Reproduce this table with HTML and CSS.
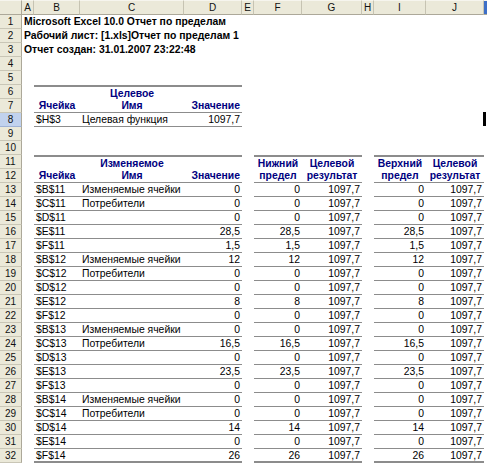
FILE: index.html
```html
<!DOCTYPE html>
<html lang="ru">
<head>
<meta charset="utf-8">
<title>Отчет по пределам</title>
<link rel="stylesheet" href="styles.css">
</head>
<body>
<div class="sheet">
  <div class="row colhdr">
    <div class="corner"></div>
    <div class="ch">A</div><div class="ch">B</div><div class="ch">C</div><div class="ch">D</div><div class="ch">E</div>
    <div class="ch">F</div><div class="ch">G</div><div class="ch">H</div><div class="ch">I</div><div class="ch">J</div><div class="ch sel"></div>
  </div>

  <div class="row"><div class="rh">1</div><div class="title">Microsoft Excel 10.0 Отчет по пределам</div></div>
  <div class="row"><div class="rh">2</div><div class="title">Рабочий лист: [1.xls]Отчет по пределам 1</div></div>
  <div class="row"><div class="rh">3</div><div class="title">Отчет создан: 31.01.2007 23:22:48</div></div>
  <div class="row"><div class="rh">4</div></div>
  <div class="row"><div class="rh">5</div></div>
  <div class="row"><div class="rh">6</div><div class="cB tp"></div><div class="cC tp hd ctr">Целевое</div><div class="cD tp"></div></div>
  <div class="row"><div class="rh">7</div><div class="cB hd ctr ln">Ячейка</div><div class="cC hd ctr ln">Имя</div><div class="cD hd num ln">Значение</div></div>
  <div class="row"><div class="rh hl">8</div><div class="cB ln">$H$3</div><div class="cC ln">Целевая функция</div><div class="cD num ln">1097,7</div><div class="cursor"></div></div>
  <div class="row"><div class="rh">9</div></div>
  <div class="row"><div class="rh">10</div></div>
  <div class="row"><div class="rh">11</div>
    <div class="cB tp"></div><div class="cC tp hd ctr">Изменяемое</div><div class="cD tp"></div>
    <div class="cF tp hd ctr">Нижний</div><div class="cG tp hd ctr">Целевой</div>
    <div class="cI tp hd ctr">Верхний</div><div class="cJ tp hd ctr">Целевой</div>
  </div>
  <div class="row"><div class="rh">12</div>
    <div class="cB hd ctr ln">Ячейка</div><div class="cC hd ctr ln">Имя</div><div class="cD hd num ln">Значение</div>
    <div class="cF hd ctr ln">предел</div><div class="cG hd ctr ln">результат</div>
    <div class="cI hd ctr ln">предел</div><div class="cJ hd ctr ln">результат</div>
  </div>

  <div class="row"><div class="rh">13</div><div class="cB ln">$B$11</div><div class="cC ln">Изменяемые ячейки</div><div class="cD num ln">0</div><div class="cF num ln">0</div><div class="cG num ln">1097,7</div><div class="cI num ln">0</div><div class="cJ num ln">1097,7</div></div>
  <div class="row"><div class="rh">14</div><div class="cB ln">$C$11</div><div class="cC ln">Потребители</div><div class="cD num ln">0</div><div class="cF num ln">0</div><div class="cG num ln">1097,7</div><div class="cI num ln">0</div><div class="cJ num ln">1097,7</div></div>
  <div class="row"><div class="rh">15</div><div class="cB ln">$D$11</div><div class="cC ln"></div><div class="cD num ln">0</div><div class="cF num ln">0</div><div class="cG num ln">1097,7</div><div class="cI num ln">0</div><div class="cJ num ln">1097,7</div></div>
  <div class="row"><div class="rh">16</div><div class="cB ln">$E$11</div><div class="cC ln"></div><div class="cD num ln">28,5</div><div class="cF num ln">28,5</div><div class="cG num ln">1097,7</div><div class="cI num ln">28,5</div><div class="cJ num ln">1097,7</div></div>
  <div class="row"><div class="rh">17</div><div class="cB ln">$F$11</div><div class="cC ln"></div><div class="cD num ln">1,5</div><div class="cF num ln">1,5</div><div class="cG num ln">1097,7</div><div class="cI num ln">1,5</div><div class="cJ num ln">1097,7</div></div>
  <div class="row"><div class="rh">18</div><div class="cB ln">$B$12</div><div class="cC ln">Изменяемые ячейки</div><div class="cD num ln">12</div><div class="cF num ln">12</div><div class="cG num ln">1097,7</div><div class="cI num ln">12</div><div class="cJ num ln">1097,7</div></div>
  <div class="row"><div class="rh">19</div><div class="cB ln">$C$12</div><div class="cC ln">Потребители</div><div class="cD num ln">0</div><div class="cF num ln">0</div><div class="cG num ln">1097,7</div><div class="cI num ln">0</div><div class="cJ num ln">1097,7</div></div>
  <div class="row"><div class="rh">20</div><div class="cB ln">$D$12</div><div class="cC ln"></div><div class="cD num ln">0</div><div class="cF num ln">0</div><div class="cG num ln">1097,7</div><div class="cI num ln">0</div><div class="cJ num ln">1097,7</div></div>
  <div class="row"><div class="rh">21</div><div class="cB ln">$E$12</div><div class="cC ln"></div><div class="cD num ln">8</div><div class="cF num ln">8</div><div class="cG num ln">1097,7</div><div class="cI num ln">8</div><div class="cJ num ln">1097,7</div></div>
  <div class="row"><div class="rh">22</div><div class="cB ln">$F$12</div><div class="cC ln"></div><div class="cD num ln">0</div><div class="cF num ln">0</div><div class="cG num ln">1097,7</div><div class="cI num ln">0</div><div class="cJ num ln">1097,7</div></div>
  <div class="row"><div class="rh">23</div><div class="cB ln">$B$13</div><div class="cC ln">Изменяемые ячейки</div><div class="cD num ln">0</div><div class="cF num ln">0</div><div class="cG num ln">1097,7</div><div class="cI num ln">0</div><div class="cJ num ln">1097,7</div></div>
  <div class="row"><div class="rh">24</div><div class="cB ln">$C$13</div><div class="cC ln">Потребители</div><div class="cD num ln">16,5</div><div class="cF num ln">16,5</div><div class="cG num ln">1097,7</div><div class="cI num ln">16,5</div><div class="cJ num ln">1097,7</div></div>
  <div class="row"><div class="rh">25</div><div class="cB ln">$D$13</div><div class="cC ln"></div><div class="cD num ln">0</div><div class="cF num ln">0</div><div class="cG num ln">1097,7</div><div class="cI num ln">0</div><div class="cJ num ln">1097,7</div></div>
  <div class="row"><div class="rh">26</div><div class="cB ln">$E$13</div><div class="cC ln"></div><div class="cD num ln">23,5</div><div class="cF num ln">23,5</div><div class="cG num ln">1097,7</div><div class="cI num ln">23,5</div><div class="cJ num ln">1097,7</div></div>
  <div class="row"><div class="rh">27</div><div class="cB ln">$F$13</div><div class="cC ln"></div><div class="cD num ln">0</div><div class="cF num ln">0</div><div class="cG num ln">1097,7</div><div class="cI num ln">0</div><div class="cJ num ln">1097,7</div></div>
  <div class="row"><div class="rh">28</div><div class="cB ln">$B$14</div><div class="cC ln">Изменяемые ячейки</div><div class="cD num ln">0</div><div class="cF num ln">0</div><div class="cG num ln">1097,7</div><div class="cI num ln">0</div><div class="cJ num ln">1097,7</div></div>
  <div class="row"><div class="rh">29</div><div class="cB ln">$C$14</div><div class="cC ln">Потребители</div><div class="cD num ln">0</div><div class="cF num ln">0</div><div class="cG num ln">1097,7</div><div class="cI num ln">0</div><div class="cJ num ln">1097,7</div></div>
  <div class="row"><div class="rh">30</div><div class="cB ln">$D$14</div><div class="cC ln"></div><div class="cD num ln">14</div><div class="cF num ln">14</div><div class="cG num ln">1097,7</div><div class="cI num ln">14</div><div class="cJ num ln">1097,7</div></div>
  <div class="row"><div class="rh">31</div><div class="cB ln">$E$14</div><div class="cC ln"></div><div class="cD num ln">0</div><div class="cF num ln">0</div><div class="cG num ln">1097,7</div><div class="cI num ln">0</div><div class="cJ num ln">1097,7</div></div>
  <div class="row last"><div class="rh">32</div><div class="cB ln">$F$14</div><div class="cC ln"></div><div class="cD num ln">26</div><div class="cF num ln">26</div><div class="cG num ln">1097,7</div><div class="cI num ln">26</div><div class="cJ num ln">1097,7</div></div>
</div>
</body>
</html>
```

FILE: styles.css
```css
html, body {
  margin: 0;
  padding: 0;
  background: #ffffff;
}

.sheet {
  position: relative;
  width: 487px;
  height: 463px;
  overflow: hidden;
  font-family: "Liberation Sans", Arial, sans-serif;
  font-size: 10.4px;
  color: #000;
}

.row {
  display: grid;
  grid-template-columns: 22px 12px 46px 104px 58px 12px 48px 60px 12px 52px 58px 1fr;
  height: 14px;
  position: relative;
}

.row > div {
  box-sizing: border-box;
  height: 14px;
  line-height: 13px;
  white-space: nowrap;
}

.colhdr {
  height: 15px;
}

.colhdr > div {
  height: 15px;
  line-height: 14px;
  background: #ebe9d9;
  border-top: 1px solid #f6f5ee;
  border-bottom: 1px solid #aca899;
  border-right: 1px solid #c6c3b2;
  text-align: center;
  font-size: 10px;
  color: #111;
}

.colhdr .corner {
  border-right: 1px solid #aca899;
}

.colhdr .sel {
  background: #3d6fc7;
  border-right: none;
}

.rh {
  grid-column: 1;
  background: #ebe9d9;
  border-right: 1px solid #aca899;
  border-bottom: 1px solid #c9c6b6;
  text-align: center;
  font-size: 10px;
  color: #111;
}

.rh.hl {
  background: #c1d2ee;
  border-bottom-color: #9fb2d6;
}

.title {
  grid-column: 2 / -1;
  font-weight: bold;
  padding-left: 2px;
}

.cB { grid-column: 3; padding-left: 2px; }
.cC { grid-column: 4; padding-left: 2px; }
.cD { grid-column: 5; }
.cF { grid-column: 7; }
.cG { grid-column: 8; }
.cI { grid-column: 10; }
.cJ { grid-column: 11; }

.num {
  text-align: right;
  padding-right: 2px;
}

.ctr {
  text-align: center;
  padding-left: 0;
}

.hd {
  font-weight: bold;
  color: #000080;
}

.tp {
  border-top: 2px solid #8c8c8c;
}

.ln {
  border-bottom: 1px solid #8c8c8c;
}

.last .ln {
  border-bottom: 2px solid #8c8c8c;
}

.cursor {
  position: absolute;
  left: 483px;
  top: -1px;
  width: 3px;
  height: 16px;
  background: #000;
}
```
